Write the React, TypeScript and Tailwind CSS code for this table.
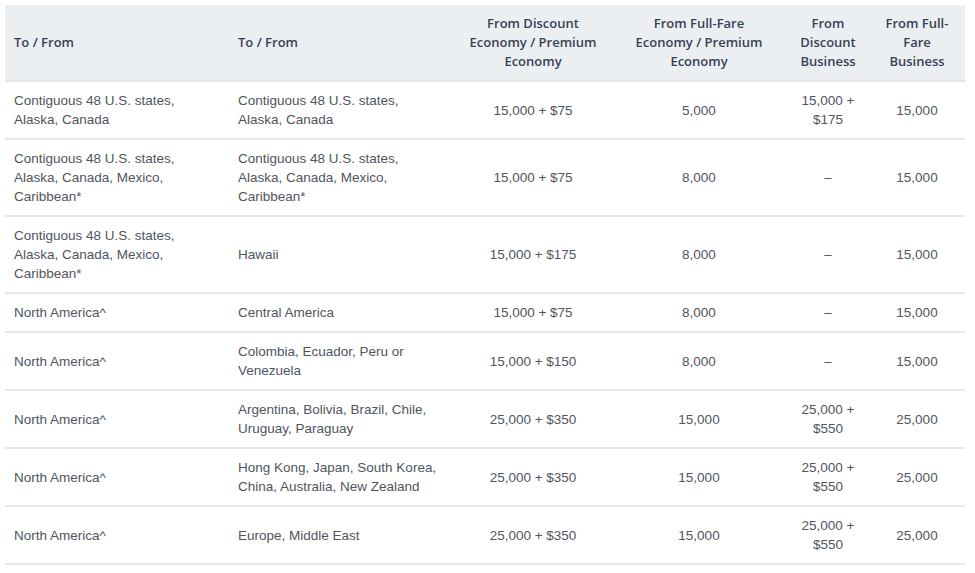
import React from "react";

type Row = { a: string[]; b: string[]; c: string[]; d: string[]; e: string[]; f: string[] };

const rows: Row[] = [
  { a: ["Contiguous 48 U.S. states,", "Alaska, Canada"], b: ["Contiguous 48 U.S. states,", "Alaska, Canada"], c: ["15,000 + $75"], d: ["5,000"], e: ["15,000 +", "$175"], f: ["15,000"] },
  { a: ["Contiguous 48 U.S. states,", "Alaska, Canada, Mexico,", "Caribbean*"], b: ["Contiguous 48 U.S. states,", "Alaska, Canada, Mexico,", "Caribbean*"], c: ["15,000 + $75"], d: ["8,000"], e: ["–"], f: ["15,000"] },
  { a: ["Contiguous 48 U.S. states,", "Alaska, Canada, Mexico,", "Caribbean*"], b: ["Hawaii"], c: ["15,000 + $175"], d: ["8,000"], e: ["–"], f: ["15,000"] },
  { a: ["North America^"], b: ["Central America"], c: ["15,000 + $75"], d: ["8,000"], e: ["–"], f: ["15,000"] },
  { a: ["North America^"], b: ["Colombia, Ecuador, Peru or", "Venezuela"], c: ["15,000 + $150"], d: ["8,000"], e: ["–"], f: ["15,000"] },
  { a: ["North America^"], b: ["Argentina, Bolivia, Brazil, Chile,", "Uruguay, Paraguay"], c: ["25,000 + $350"], d: ["15,000"], e: ["25,000 +", "$550"], f: ["25,000"] },
  { a: ["North America^"], b: ["Hong Kong, Japan, South Korea,", "China, Australia, New Zealand"], c: ["25,000 + $350"], d: ["15,000"], e: ["25,000 +", "$550"], f: ["25,000"] },
  { a: ["North America^"], b: ["Europe, Middle East"], c: ["25,000 + $350"], d: ["15,000"], e: ["25,000 +", "$550"], f: ["25,000"] },
];

function Lines({ lines }: { lines: string[] }) {
  return (
    <>
      {lines.map((l, i) => (
        <React.Fragment key={i}>
          {i > 0 && <br />}
          {l}
        </React.Fragment>
      ))}
    </>
  );
}

const headers: { lines: string[]; left?: boolean }[] = [
  { lines: ["To / From"], left: true },
  { lines: ["To / From"], left: true },
  { lines: ["From Discount", "Economy / Premium", "Economy"] },
  { lines: ["From Full-Fare", "Economy / Premium", "Economy"] },
  { lines: ["From", "Discount", "Business"] },
  { lines: ["From Full-", "Fare", "Business"] },
];

const td = "py-[9px] px-[9px] align-middle text-[13.5px] leading-[19px] text-[#50555e] whitespace-nowrap";

export default function App() {
  return (
    <div className="w-[975px] h-[573px] bg-white pt-[5px] pl-[5px]">
      <table className="w-[960px] table-fixed border-collapse">
        <colgroup>
          <col className="w-[224px]" />
          <col className="w-[226px]" />
          <col className="w-[156px]" />
          <col className="w-[176px]" />
          <col className="w-[82px]" />
          <col className="w-[96px]" />
        </colgroup>
        <thead>
          <tr className="bg-[#eceff2] border-b-2 border-[#e1e6eb]">
            {headers.map((h, i) => (
              <th
                key={i}
                className={`pt-[9px] pb-[9px] px-[9px] align-middle font-semibold text-[13px] leading-[19px] text-[#354256] whitespace-nowrap ${h.left ? "text-left" : "text-center"}`}
                style={{ fontFamily: '"Open Sans", sans-serif' }}
              >
                <Lines lines={h.lines} />
              </th>
            ))}
          </tr>
        </thead>
        <tbody style={{ fontFamily: '"Liberation Sans", Arial, sans-serif' }}>
          {rows.map((r, i) => (
            <tr key={i} className="border-b-2 border-[#e4e9ee]">
              <td className={`${td} text-left`}>
                <Lines lines={r.a} />
              </td>
              <td className={`${td} text-left`}>
                <Lines lines={r.b} />
              </td>
              <td className={`${td} text-center`}>
                <Lines lines={r.c} />
              </td>
              <td className={`${td} text-center`}>
                <Lines lines={r.d} />
              </td>
              <td className={`${td} text-center`}>
                <Lines lines={r.e} />
              </td>
              <td className={`${td} text-center`}>
                <Lines lines={r.f} />
              </td>
            </tr>
          ))}
        </tbody>
      </table>
    </div>
  );
}
